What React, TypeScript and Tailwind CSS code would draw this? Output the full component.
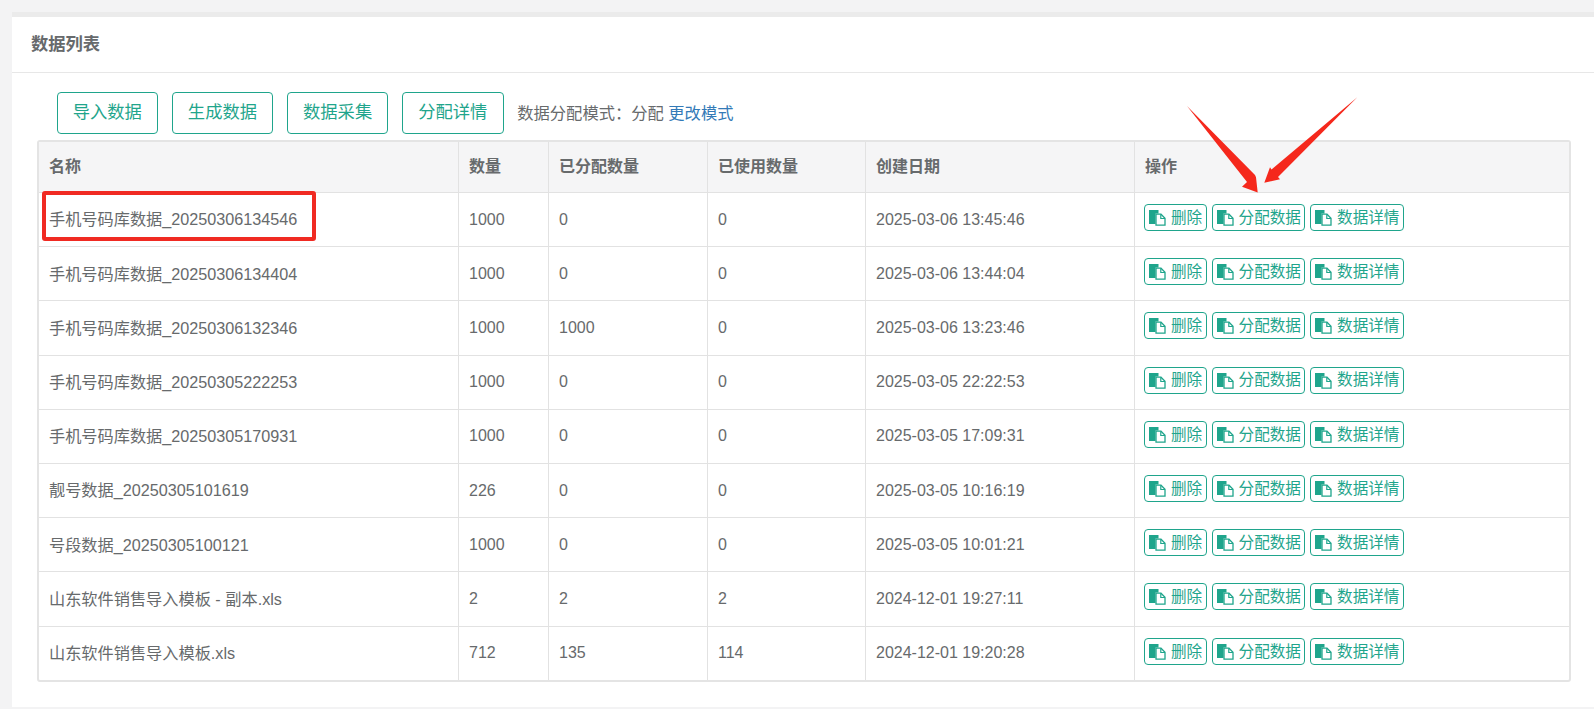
const rows = [
  ["手机号码库数据_20250306134546", "1000", "0", "0", "2025-03-06 13:45:46"],
  ["手机号码库数据_20250306134404", "1000", "0", "0", "2025-03-06 13:44:04"],
  ["手机号码库数据_20250306132346", "1000", "1000", "0", "2025-03-06 13:23:46"],
  ["手机号码库数据_20250305222253", "1000", "0", "0", "2025-03-05 22:22:53"],
  ["手机号码库数据_20250305170931", "1000", "0", "0", "2025-03-05 17:09:31"],
  ["靓号数据_20250305101619", "226", "0", "0", "2025-03-05 10:16:19"],
  ["号段数据_20250305100121", "1000", "0", "0", "2025-03-05 10:01:21"],
  ["山东软件销售导入模板 - 副本.xls", "2", "2", "2", "2024-12-01 19:27:11"],
  ["山东软件销售导入模板.xls", "712", "135", "114", "2024-12-01 19:20:28"],
];

function CopyIcon() {
  return (
    <svg width="18" height="17" viewBox="0 0 18 17" className="shrink-0">
      <path d="M1 1h9.500v3.500H7.500v10.500H1z" fill="#1fa58c" />
      <path d="M8 5.200h5l4 4v7H8z" fill="#fff" stroke="#1fa58c" strokeWidth="1.300" />
      <path d="M12.800 5.200v4.300h4.200" fill="none" stroke="#1fa58c" strokeWidth="1.200" />
    </svg>
  );
}

function ActionButton({ label, width }: { label: string; width: string }) {
  return (
    <button
      className={`flex h-[27px] items-center justify-center gap-[5px] rounded-[4px] border border-[#1fa58c] bg-white text-[15.6px] text-[#1fa58c] ${width}`}
    >
      <CopyIcon />
      {label}
    </button>
  );
}

export default function App() {
  return (
    <div className="relative h-[709px] overflow-hidden bg-[#f3f3f4] pl-3 pt-3 font-['Liberation_Sans','Noto_Sans_CJK_SC',sans-serif] text-[#676a6c]">
      <section className="h-[695px] border-t-[5px] border-[#ebebeb] bg-white">
        <h5 className="flex h-[56px] items-center border-b border-[#e7e7e7] pl-[19px] text-[17.3px] font-bold">
          数据列表
        </h5>
        <div className="pl-[25px] pr-[23px]">
          <div className="flex items-center gap-[13.7px] pl-[19.5px] pt-[19px]">
            {["导入数据", "生成数据", "数据采集", "分配详情"].map((label) => (
              <button
                key={label}
                className="h-[42px] w-[101.5px] rounded-[4px] border border-[#1fa58c] text-[17.3px] text-[#1fa58c]"
              >
                {label}
              </button>
            ))}
            <p className="text-[16.3px]">
              数据分配模式：分配 <a className="text-[#337ab7]">更改模式</a>
            </p>
          </div>
          <div className="mt-[6px] overflow-hidden rounded-[3px] border-2 border-[#e4e4e4]">
            <table className="w-full table-fixed border-collapse text-left text-[16px]">
              <colgroup>
                <col className="w-[419px]" />
                <col className="w-[90px]" />
                <col className="w-[159px]" />
                <col className="w-[158px]" />
                <col className="w-[269px]" />
                <col />
              </colgroup>
              <thead>
                <tr className="h-[50.5px] bg-[#f5f5f6]">
                  {["名称", "数量", "已分配数量", "已使用数量", "创建日期", "操作"].map((head) => (
                    <th key={head} className="border-b border-l border-[#e2e2e2] pl-[10.5px] font-bold first:border-l-0 first:pl-[10px]">
                      {head}
                    </th>
                  ))}
                </tr>
              </thead>
              <tbody>
                {rows.map((row) => (
                  <tr key={row[0]} className="h-[54.2px] border-b border-[#e2e2e2] last:border-b-0">
                    {row.map((cell, i) => (
                      <td key={i} className="border-l border-[#e2e2e2] pl-[10.5px] first:border-l-0 first:pl-[10px] first:text-[16.2px]">
                        {cell}
                      </td>
                    ))}
                    <td className="border-l border-[#e2e2e2] pl-[9px]">
                      <div className="mb-[4px] flex gap-[5px]">
                        <ActionButton label="删除" width="w-[63px]" />
                        <ActionButton label="分配数据" width="w-[93.5px]" />
                        <ActionButton label="数据详情" width="w-[93.5px]" />
                      </div>
                    </td>
                  </tr>
                ))}
              </tbody>
            </table>
          </div>
        </div>
      </section>

      {/* screenshot annotations */}
      <div className="absolute left-[42px] top-[191px] h-[50px] w-[274px] rounded-[3px] border-4 border-[#f02a22]" />
      <svg className="pointer-events-none absolute left-0 top-0" width="1594" height="709">
        <path d="M1187 106L1255 175L1256 177.300L1257.700 192.500L1242 186.700L1247 182Z" fill="#f5281c" />
        <path d="M1357.300 97.300L1278 177L1280 179.300L1264.300 182.700L1270 167.300L1271.500 169.500Z" fill="#f5281c" />
      </svg>
    </div>
  );
}
